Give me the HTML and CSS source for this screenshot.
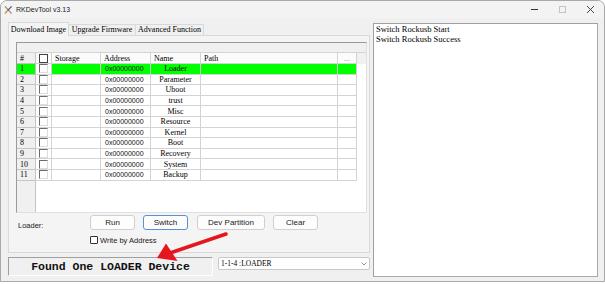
FILE: index.html
```html
<!DOCTYPE html>
<html lang="en">
<head>
  <meta charset="UTF-8">
  <meta name="viewport" content="width=device-width, initial-scale=1.0">
  <title>RKDevTool v3.13</title>
  <link rel="stylesheet" href="styles.css">
</head>
<body>
  <div class="window">
    <div class="titlebar">
      <svg class="app-icon" viewBox="0 0 10 10">
        <line x1="1" y1="1" x2="8.5" y2="9" stroke="#8c8c8c" stroke-width="1.4"/>
        <line x1="8.5" y1="1" x2="4" y2="5.5" stroke="#5a5a5a" stroke-width="1.4"/>
        <line x1="4" y1="5.5" x2="1" y2="9" stroke="#e08a2c" stroke-width="1.6"/>
      </svg>
      <span class="title">RKDevTool v3.13</span>
      <div class="controls">
        <span class="ctl"><span class="ctl-min"></span></span>
        <span class="ctl"><span class="ctl-max"></span></span>
        <span class="ctl">
          <svg class="ctl-close" viewBox="0 0 7 7">
            <path d="M0 0 L7 7 M7 0 L0 7" stroke="#333" stroke-width="0.9"/>
          </svg>
        </span>
      </div>
    </div>

    <div class="client">
      <div class="left">
        <div class="tabs">
          <div class="tab active">Download Image</div>
          <div class="tab t2">Upgrade Firmware</div>
          <div class="tab t3">Advanced Function</div>
        </div>

        <div class="panel">
          <div class="grid">
            <div class="band"></div>
            <div class="row head">
              <div class="cell rh">#</div>
              <div class="cell cbc"><span class="cb full"></span></div>
              <div class="cell">Storage</div>
              <div class="cell">Address</div>
              <div class="cell">Name</div>
              <div class="cell">Path</div>
              <div class="cell dots">...</div>
            </div>
            <div class="row on">
              <div class="cell rh">1</div><div class="cell cbc"><span class="cb"></span></div><div class="cell"></div>
              <div class="cell addr">0x00000000</div><div class="cell name">Loader</div><div class="cell"></div><div class="cell"></div>
            </div>
            <div class="row">
              <div class="cell rh">2</div><div class="cell cbc"><span class="cb"></span></div><div class="cell"></div>
              <div class="cell addr">0x00000000</div><div class="cell name">Parameter</div><div class="cell"></div><div class="cell"></div>
            </div>
            <div class="row">
              <div class="cell rh">3</div><div class="cell cbc"><span class="cb"></span></div><div class="cell"></div>
              <div class="cell addr">0x00000000</div><div class="cell name">Uboot</div><div class="cell"></div><div class="cell"></div>
            </div>
            <div class="row">
              <div class="cell rh">4</div><div class="cell cbc"><span class="cb"></span></div><div class="cell"></div>
              <div class="cell addr">0x00000000</div><div class="cell name">trust</div><div class="cell"></div><div class="cell"></div>
            </div>
            <div class="row">
              <div class="cell rh">5</div><div class="cell cbc"><span class="cb"></span></div><div class="cell"></div>
              <div class="cell addr">0x00000000</div><div class="cell name">Misc</div><div class="cell"></div><div class="cell"></div>
            </div>
            <div class="row">
              <div class="cell rh">6</div><div class="cell cbc"><span class="cb"></span></div><div class="cell"></div>
              <div class="cell addr">0x00000000</div><div class="cell name">Resource</div><div class="cell"></div><div class="cell"></div>
            </div>
            <div class="row">
              <div class="cell rh">7</div><div class="cell cbc"><span class="cb"></span></div><div class="cell"></div>
              <div class="cell addr">0x00000000</div><div class="cell name">Kernel</div><div class="cell"></div><div class="cell"></div>
            </div>
            <div class="row">
              <div class="cell rh">8</div><div class="cell cbc"><span class="cb"></span></div><div class="cell"></div>
              <div class="cell addr">0x00000000</div><div class="cell name">Boot</div><div class="cell"></div><div class="cell"></div>
            </div>
            <div class="row">
              <div class="cell rh">9</div><div class="cell cbc"><span class="cb"></span></div><div class="cell"></div>
              <div class="cell addr">0x00000000</div><div class="cell name">Recovery</div><div class="cell"></div><div class="cell"></div>
            </div>
            <div class="row">
              <div class="cell rh">10</div><div class="cell cbc"><span class="cb"></span></div><div class="cell"></div>
              <div class="cell addr">0x00000000</div><div class="cell name">System</div><div class="cell"></div><div class="cell"></div>
            </div>
            <div class="row">
              <div class="cell rh">11</div><div class="cell cbc"><span class="cb"></span></div><div class="cell"></div>
              <div class="cell addr">0x00000000</div><div class="cell name">Backup</div><div class="cell"></div><div class="cell"></div>
            </div>
          </div>

          <div class="btn-row">
            <span class="lbl">Loader:</span>
            <button class="btn">Run</button>
            <button class="btn focus">Switch</button>
            <button class="btn wide">Dev Partition</button>
            <button class="btn">Clear</button>
          </div>
          <div class="check-row">
            <span class="box"></span>
            <span class="lbl">Write by Address</span>
          </div>
        </div>

        <div class="status-row">
          <div class="status">Found One LOADER Device</div>
          <div class="combo">
            <span>1-1-4 :LOADER</span>
            <svg class="chev" viewBox="0 0 6 4"><polyline points="0.5,0.5 3,3 5.5,0.5" fill="none" stroke="#777" stroke-width="0.8"/></svg>
          </div>
        </div>
      </div>

      <div class="log">
        <div>Switch Rockusb Start</div>
        <div>Switch Rockusb Success</div>
      </div>
    </div>
  </div>

  <svg class="arrow" viewBox="0 0 605 284">
    <line x1="226" y1="234" x2="170" y2="253" stroke="#e5161e" stroke-width="3.6" stroke-linecap="round"/>
    <polygon points="157,258 166,243.5 177.5,261" fill="#e5161e"/>
  </svg>
</body>
</html>
```

FILE: styles.css
```css
body {
  margin: 0;
  width: 605px;
  height: 284px;
  overflow: hidden;
  position: relative;
  background: #fff;
  font-family: "Liberation Sans", Arial, sans-serif;
  color: #000;
}

.window {
  box-sizing: border-box;
  height: 282px;
  border: 1px solid #a9a9a9;
  border-radius: 7px 7px 0 0;
  background: #f0f0f0;
  display: flex;
  flex-direction: column;
}

/* title bar */
.titlebar {
  height: 17px;
  display: flex;
  align-items: center;
  padding-left: 3px;
  background: #f3f3f3;
  border-radius: 7px 7px 0 0;
}

.app-icon {
  width: 9px;
  height: 10px;
  margin-right: 3px;
}

.title {
  font-size: 7px;
  color: #1b1b1b;
}

.controls {
  margin-left: auto;
  display: flex;
  height: 100%;
}

.ctl {
  width: 28px;
  display: flex;
  align-items: center;
  justify-content: center;
}

.ctl-min {
  width: 7px;
  height: 1px;
  background: #333;
}

.ctl-max {
  width: 5px;
  height: 5px;
  border: 1px solid #c4c4c4;
}

.ctl-close {
  width: 7px;
  height: 7px;
}

/* client area */
.client {
  flex: 1;
  display: flex;
  gap: 3px;
  padding: 4px 5px 0 7px;
}

.left {
  width: 362px;
  display: flex;
  flex-direction: column;
}

.tabs {
  display: flex;
  align-items: flex-end;
  height: 13px;
}

.tab {
  box-sizing: border-box;
  height: 11px;
  line-height: 10px;
  border: 1px solid #d9d9d9;
  border-bottom: none;
  background: #f0f0f0;
  font: 8px "Liberation Serif", serif;
  text-align: center;
  white-space: nowrap;
}

.tab.active {
  width: 61px;
  height: 14px;
  line-height: 14px;
  margin-bottom: -1px;
  background: #f4f4f4;
  position: relative;
  z-index: 1;
}

.tab.t2 {
  width: 68px;
  margin-left: -1px;
}

.tab.t3 {
  width: 69px;
  margin-left: -1px;
}

.panel {
  box-sizing: border-box;
  height: 218px;
  border: 1px solid #d9d9d9;
  background: #f4f4f4;
  padding: 6px 0 0 7px;
}

/* partition grid */
.grid {
  box-sizing: border-box;
  width: 351px;
  height: 171px;
  border-top: 1px solid #9a9a9a;
  border-left: 1px solid #9a9a9a;
  border-right: 1px solid #e0e0e0;
  border-bottom: 1px solid #e0e0e0;
  background: linear-gradient(to right, #f0f0f0 18px, #c4c4c4 18px, #c4c4c4 19px, #fff 19px);
}

.band {
  box-sizing: border-box;
  height: 10px;
  background: #f0f0f0;
  border-bottom: 1px solid #d3d3d3;
}

.row {
  display: grid;
  grid-template-columns: 19px 16px 49px 50px 50px 137px 19px;
  height: 10.6px;
  font: 8px "Liberation Serif", serif;
}

.row.head {
  height: 11px;
  background: #f0f0f0;
}

.cell {
  box-sizing: border-box;
  border-right: 1px solid #d3d3d3;
  border-bottom: 1px solid #d3d3d3;
  padding-left: 3px;
  white-space: nowrap;
  overflow: hidden;
  display: flex;
  align-items: center;
  background: #fff;
}

.head .cell {
  background: #fbfbfb;
}

.cell.rh {
  background: #f0f0f0;
  border-color: #c4c4c4;
  padding-left: 3px;
}

.cell.cbc {
  padding-left: 3px;
}

.cell.addr {
  font: 7px "Liberation Sans", Arial, sans-serif;
  padding-left: 4px;
  color: #111;
}

.cell.name {
  justify-content: center;
  padding-left: 0;
}

.cell.dots {
  justify-content: center;
  padding-left: 0;
  color: #888;
}

.row.on .cell {
  background: #00ff00;
}

.row.on .cell.cbc {
  background: #fff;
}

.cb {
  width: 7px;
  height: 7px;
  background: #fff;
  border: 1px solid;
  border-color: #6d6d6d #dcdcdc #dcdcdc #6d6d6d;
}

.cb.full {
  border-color: #444;
}

/* buttons */
.btn-row {
  display: flex;
  align-items: center;
  margin-top: 2px;
  height: 15px;
}

.lbl {
  font-size: 7.5px;
  color: #1a1a1a;
}

.btn-row .lbl {
  width: 72px;
  margin-left: 2px;
  padding-top: 5px;
}

.btn {
  box-sizing: border-box;
  width: 45px;
  height: 15px;
  margin: 0 8px 0 0;
  padding: 0;
  border: 1px solid #d0d0d0;
  border-radius: 3px;
  background: #fdfdfd;
  font: 8px "Liberation Sans", Arial, sans-serif;
  color: #1a1a1a;
}

.btn.focus {
  border-color: #5b8fd6;
  margin-right: 9px;
}

.btn.wide {
  width: 68px;
}

.check-row {
  display: flex;
  align-items: center;
  gap: 2px;
  margin-top: 6px;
  padding-left: 74px;
  height: 8px;
}

.box {
  box-sizing: border-box;
  width: 8px;
  height: 8px;
  border: 1px solid #333;
  border-radius: 1px;
  background: #fff;
}

/* status line */
.status-row {
  display: flex;
  gap: 5px;
  margin-top: 4px;
}

.status {
  box-sizing: border-box;
  width: 205px;
  height: 19px;
  border: 1px solid;
  border-color: #a0a0a0 #fff #fff #a0a0a0;
  font: bold 11.5px "Liberation Mono", "Courier New", monospace;
  text-align: center;
  line-height: 18px;
  color: #111;
}

.combo {
  box-sizing: border-box;
  width: 152px;
  height: 13px;
  border: 1px solid #c8c8c8;
  border-radius: 2px;
  background: #fff;
  display: flex;
  align-items: center;
  padding: 0 2px 0 2px;
  font: 7.5px "Liberation Serif", serif;
}

.chev {
  width: 6px;
  height: 4px;
  margin-left: auto;
}

/* log box */
.log {
  box-sizing: border-box;
  width: 225px;
  height: 254px;
  margin-top: 1px;
  background: #fff;
  border: 1px solid;
  border-color: #a0a0a0 #a8a8a8 #a8a8a8 #a0a0a0;
  padding: 0 0 0 2px;
  font: 8.5px "Liberation Serif", serif;
  line-height: 10px;
}

.arrow {
  position: absolute;
  left: 0;
  top: 0;
  width: 605px;
  height: 284px;
  pointer-events: none;
}
```
